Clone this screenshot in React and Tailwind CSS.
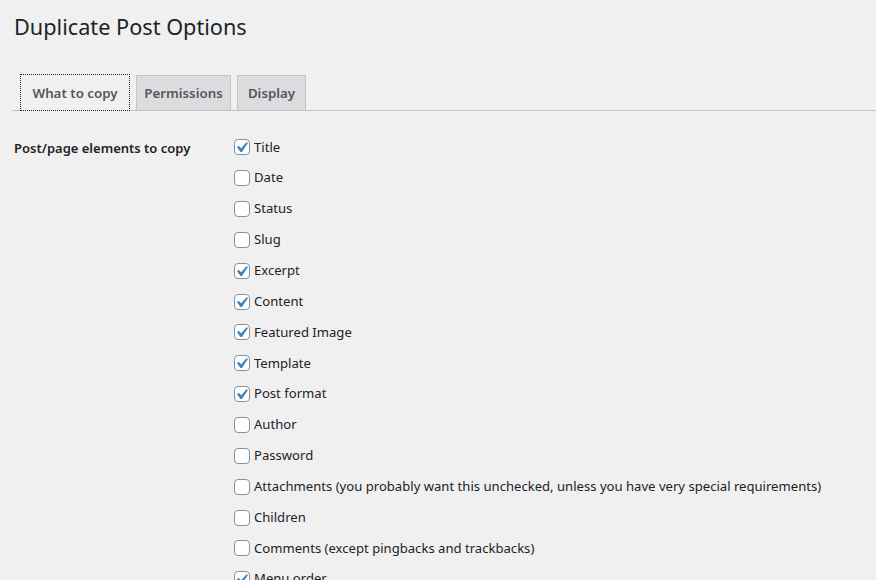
import React from 'react';

const items = [
  { label: 'Title', checked: true },
  { label: 'Date', checked: false },
  { label: 'Status', checked: false },
  { label: 'Slug', checked: false },
  { label: 'Excerpt', checked: true },
  { label: 'Content', checked: true },
  { label: 'Featured Image', checked: true },
  { label: 'Template', checked: true },
  { label: 'Post format', checked: true },
  { label: 'Author', checked: false },
  { label: 'Password', checked: false },
  { label: 'Attachments (you probably want this unchecked, unless you have very special requirements)', checked: false },
  { label: 'Children', checked: false },
  { label: 'Comments (except pingbacks and trackbacks)', checked: false },
  { label: 'Menu order', checked: true },
];

const Checkbox = ({ checked }) => (
  <span className="relative inline-block w-4 h-4 shrink-0 rounded-[4px] border border-[#8c8f94] bg-white">
    {checked && (
      <svg viewBox="0 0 20 20" className="absolute -left-[4px] -top-[3px] w-[21px] h-[21px]">
        <path d="M14.83 4.89l1.34.94-5.81 8.38H9.02L5.78 9.67l1.34-1.25 2.57 2.4z" fill="#3582c4" />
      </svg>
    )}
  </span>
);

const App = () => {
  return (
    <div className="w-[876px] h-[580px] overflow-hidden bg-[#f0f0f1] text-[#1d2327] font-['Noto_Sans',sans-serif]">

      {/* Heading */}
      <h1 className="pl-[14px] pt-[12px] text-[21.7px] leading-[30px] font-normal">Duplicate Post Options</h1>

      {/* Tabs */}
      <div className="mt-[32px] ml-[12px] flex items-end gap-[6px] border-b border-[#c3c4c7] pl-[8px] h-[37px]">
        <div className="h-[37px] w-[110px] -mb-px pt-[2px] flex items-center justify-center border border-dotted border-[#1d2327] bg-[#f0f0f1] text-[13.3px] font-semibold text-[#50575e]">
          What to copy
        </div>
        <div className="h-[35px] w-[95px] pt-[2px] flex items-center justify-center border border-[#c3c4c7] border-b-0 bg-[#dcdcde] text-[13.3px] font-semibold text-[#50575e]">
          Permissions
        </div>
        <div className="h-[35px] w-[69px] pt-[2px] flex items-center justify-center border border-[#c3c4c7] border-b-0 bg-[#dcdcde] text-[13.3px] font-semibold text-[#50575e]">
          Display
        </div>
      </div>

      {/* Options */}
      <div className="flex pl-[14px] pt-[21px]">
        <div className="w-[220px] shrink-0 pt-[5px] text-[13px] leading-[22px] font-semibold">Post/page elements to copy</div>
        <div className="flex flex-col">
          {items.map((item) => (
            <label key={item.label} className="flex items-center h-[30.85px] text-[13.1px] gap-[4px] whitespace-nowrap">
              <Checkbox checked={item.checked} />
              {item.label}
            </label>
          ))}
        </div>
      </div>

    </div>
  );
};

export default App;
